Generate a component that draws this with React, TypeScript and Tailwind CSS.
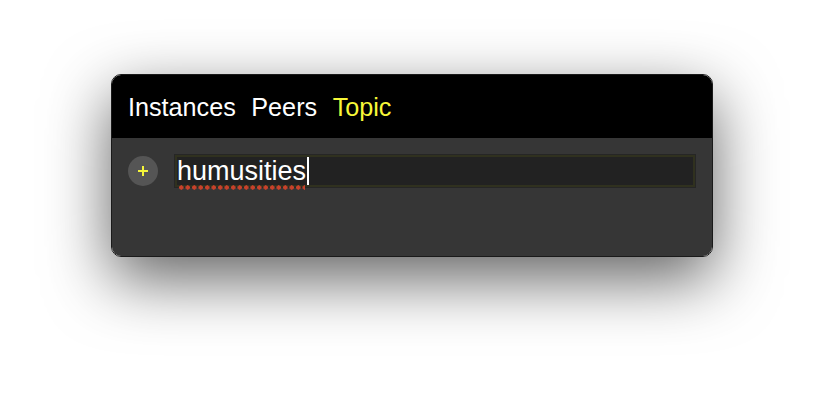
import React from "react";

export default function App() {
  return (
    <div className="w-[824px] h-[404px] bg-white flex items-start justify-start overflow-hidden" style={{ fontFamily: '"Liberation Sans", Arial, sans-serif' }}>
      <div className="ml-[111px] mt-[74px] w-[602px] h-[183px] rounded-[10px] border border-[#1a1a1a] overflow-hidden flex flex-col shadow-[0_22px_64px_rgba(0,0,0,0.62)]">
        <div className="h-[63px] bg-black flex items-center pl-[16px] gap-[15.5px] text-[25.2px] leading-none text-white pt-[2px]">
          <span>Instances</span>
          <span>Peers</span>
          <span className="text-[#f7f738]">Topic</span>
        </div>
        <div className="flex-1 bg-[#363636] flex items-start pt-[16px] pl-[16px] pr-[16px]">
          <div className="w-[30px] h-[30px] rounded-full bg-[#555555] flex items-center justify-center mt-[2px]">
            <svg width="12" height="12" viewBox="0 0 12 12">
              <path d="M6 1v10M1 6h10" stroke="#f4f43a" strokeWidth="2" />
            </svg>
          </div>
          <div className="ml-[16px] flex-1 h-[34px] border border-[#262626] bg-[#222222]">
            <div className="h-full border-2 border-[#30311f] flex items-center">
              <span className="relative text-[27px] leading-none text-white">
                humusities
                <span className="absolute left-[1px] right-[1px] bottom-[-5px] h-[5px] bg-[radial-gradient(circle,#c8412a_2px,transparent_2.3px)] bg-[length:6.5px_5px]"></span>
              </span>
              <span className="w-[2px] h-[28px] bg-white ml-[1px]"></span>
            </div>
          </div>
        </div>
      </div>
    </div>
  );
}
